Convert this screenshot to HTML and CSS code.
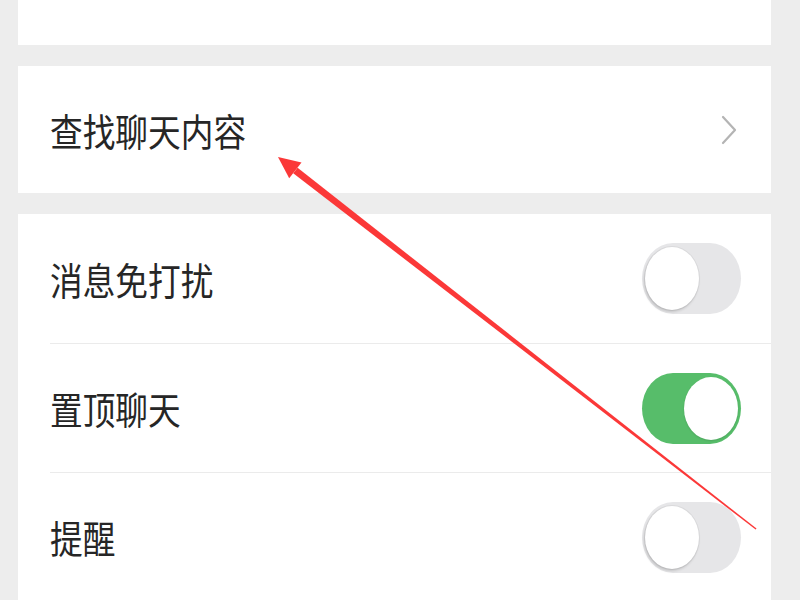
FILE: index.html
```html
<!DOCTYPE html>
<html>
<head>
<meta charset="utf-8">
<title>聊天信息</title>
<link rel="stylesheet" href="styles.css">
</head>
<body>
<div class="page">
  <div class="card card-top"></div>

  <div class="card">
    <div class="cell">
      <span class="label">查找聊天内容</span>
      <svg class="chevron" width="16" height="30" viewBox="0 0 16 30"><path d="M2 2 L14 15 L2 28" fill="none" stroke="#b4b4b4" stroke-width="2.2" stroke-linecap="round" stroke-linejoin="round"/></svg>
    </div>
  </div>

  <div class="card group">
    <div class="row">
      <div class="row-inner">
        <span class="label">消息免打扰</span>
        <span class="switch"><i class="knob"></i></span>
      </div>
    </div>
    <div class="row">
      <div class="row-inner">
        <span class="label">置顶聊天</span>
        <span class="switch on"><i class="knob"></i></span>
      </div>
    </div>
    <div class="row">
      <div class="row-inner">
        <span class="label">提醒</span>
        <span class="switch"><i class="knob"></i></span>
      </div>
    </div>
  </div>
</div>

<!-- 标注箭头 -->
<svg class="arrow" width="800" height="600" viewBox="0 0 800 600">
  <polygon points="293.2,173.2 297.6,167.8 756.5,528.6 755.6,529.6" fill="#fb3838"/>
  <polygon points="278,157 301.5,162.6 289.2,178.2" fill="#fb3838"/>
</svg>
</body>
</html>
```

FILE: styles.css
```css
html, body {margin: 0; padding: 0;}
body {width: 800px; height: 600px; overflow: hidden; position: relative; background: #ededed; font-family: "Noto Sans CJK SC", "Noto Sans", sans-serif; color: #262626;}

.page {padding: 0 29px 0 18px;}
.card {background: #fff;}
.card-top {height: 45px; margin-bottom: 21px;}

.cell {height: 127px; display: flex; align-items: center; justify-content: space-between; padding: 0 34px 0 32px;}
/* 原图横向略压缩 */
.label {display: block; font-size: 38px; line-height: 44px; font-weight: 400; transform: scaleX(0.86); transform-origin: left center;}
.chevron {display: block;}

.group {margin-top: 21px;}
.row {padding-left: 32px;}
.row-inner {height: 129px; display: flex; align-items: center; justify-content: space-between; padding-right: 30px; border-top: 1px solid #ebebeb;}
.row:first-child .row-inner {border-top: 0; height: 129px;}
.row + .row .row-inner {height: 128px;}

/* 开关 */
.switch {position: relative; display: block; width: 99px; height: 71px; border-radius: 31px / 35.5px; background: #e6e6e8;}
.switch .knob {position: absolute; left: 3px; top: 4px; width: 54px; height: 63px; border-radius: 50%; background: #fff; box-shadow: -1px 2px 3px rgba(0,0,0,.16), 0 0 0 1px rgba(0,0,0,.05);}
.switch.on {background: #57bd6a;}
.switch.on .knob {left: 42px; box-shadow: 0 1px 2px rgba(0,0,0,.12);}

.arrow {position: absolute; left: 0; top: 0;}
```
